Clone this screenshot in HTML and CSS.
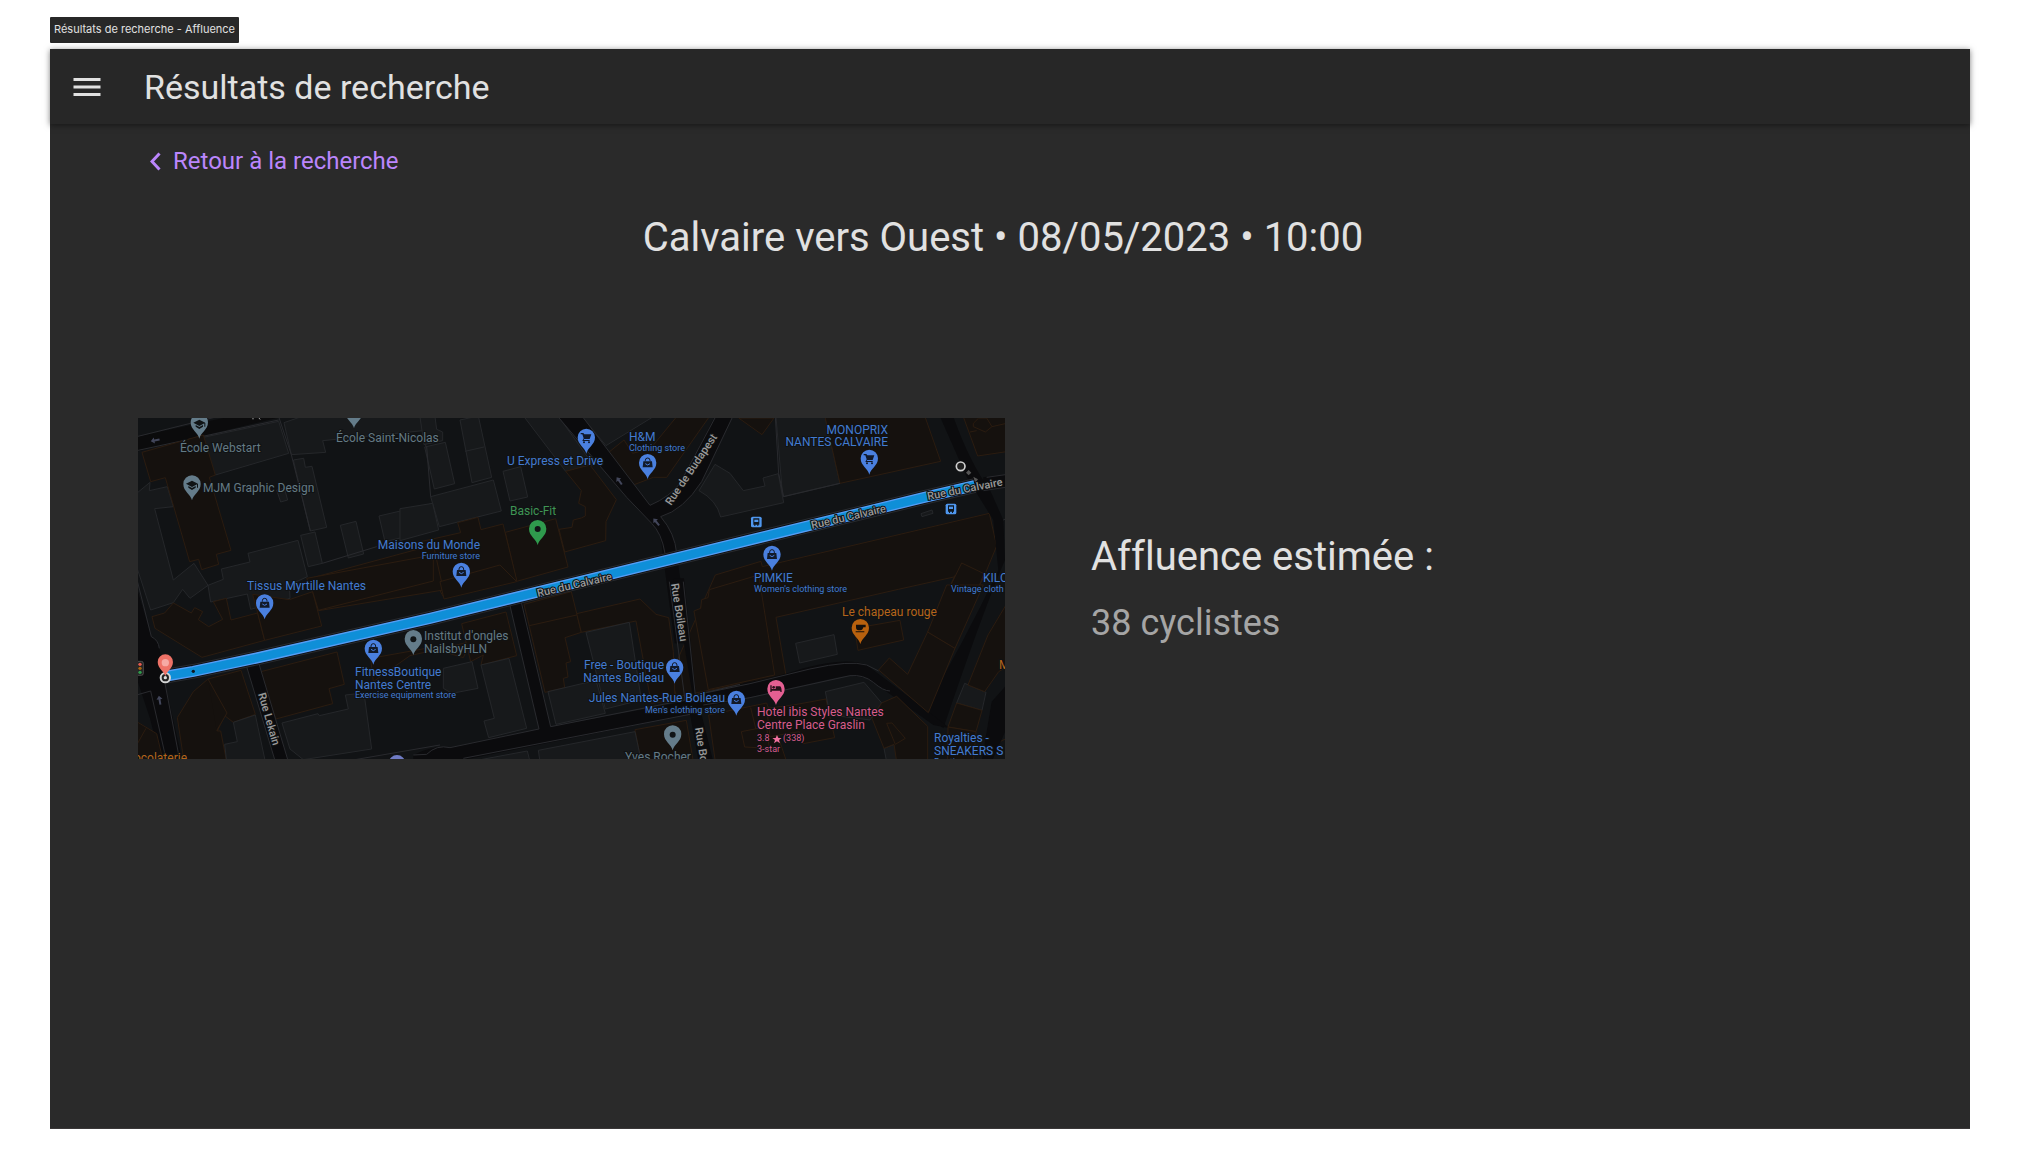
FILE: index.html
```html
<!DOCTYPE html>
<html lang="fr">
<head>
<meta charset="utf-8">
<meta name="viewport" content="width=device-width, initial-scale=1">
<title>Résultats de recherche - Affluence</title>
<link rel="stylesheet" href="styles.css">
</head>
<body>
<p class="frame-label">Résultats de recherche - Affluence</p>
<div class="screen">
  <header class="app-bar">
    <button class="menu-button" type="button" aria-label="Menu">
      <svg width="36" height="36" viewBox="0 0 24 24" aria-hidden="true"><path d="M3 18h18v-2H3v2zm0-5h18v-2H3v2zm0-7v2h18V6H3z" fill="currentColor"/></svg>
    </button>
    <h1 class="app-title">Résultats de recherche</h1>
  </header>
  <main class="content">
    <a class="back-link" href="#recherche">
      <svg width="11" height="19" viewBox="0 0 11 19" aria-hidden="true"><path d="M9.500 1.500L2 9.500l7.500 8" fill="none" stroke="currentColor" stroke-width="3"/></svg>
      Retour à la recherche
    </a>
    <h2 class="query">Calvaire vers Ouest • 08/05/2023 • 10:00</h2>
    <div class="result">
      <svg class="map" viewBox="0 0 867 341" role="img" aria-label="Itinéraire rue du Calvaire, Nantes">
        <defs>
          <path id="pin" d="M0 49C-4 30-26 23-26 0A26 26 0 1 1 26 0C26 23 4 30 0 49Z"/>
          <g id="bag"><path d="M-13-4H13L15 14H-15ZM-6-4V-8A6 6 0 0 1 6-8V-4" fill="#121a29"/><path d="M-7-4V-7A7 7 0 0 1 7-7V-4" fill="#4a80df" stroke="#121a29" stroke-width="3"/><path d="M-7 3Q0 11 7 3" fill="none" stroke="#4a80df" stroke-width="3"/></g>
          <g id="cart" fill="#10182a"><path d="M-17-15H-9L-6-11H15L10 3H-6L-8 6H10V9H-12L-8 1-12-11H-17Z"/><circle cx="-7" cy="13" r="3"/><circle cx="8" cy="13" r="3"/></g>
          <g id="school" fill="#101416"><path d="M-18-3L0-12 18-3 0 7ZM-11 4L0 10 11 4V9L0 16-11 9ZM15-2H18V9H15Z"/></g>
          <g id="bus"><rect x="-16" y="-16" width="32" height="32" rx="5" fill="#4f97ee"/><path d="M-9-11H9V8H6V12H3V8H-3V12H-6V8H-9Z" fill="#101820"/><path d="M-6-7H6V0H-6Z" fill="#4f97ee"/></g>
          <path id="arrow" d="M-14 0L-3-9V-3H13V3H-3V9Z" fill="#42465a"/>
        </defs>
        <rect width="867" height="341" fill="#111315"/>
        <g transform="scale(.33333)">
          <!-- north-west block -->
          <g transform="translate(-24 -24)">
            <g class="lot">
              <path d="M220 82L446 34 476 130 256 195 240 170Z"/>
              <path d="M462 38L520 18H900V60L578 92 587 127 484 134Z"/>
              <path d="M490 150L521 145 526 172 546 169 590 352 541 363Z"/>
              <path d="M440 240L463 234 473 270 452 276Z"/>
              <path d="M631 346L678 334 701 432 655 444Z"/>
              <path d="M512 376L555 366 577 460 535 470Z"/>
              <path d="M747 318L910 280V360L765 395Z"/>
              <path d="M20 250L60 217 58 242 112 230 130 290 74 296 130 510 192 460 234 526 180 565 158 538 130 578 62 600 20 470Z"/>
              <path d="M274 477L360 456 354 430 504 391 532 500 478 525 480 565 362 598 352 552 242 576 234 526 280 508Z"/>
            </g>
            <path d="M20 80L280 24H440L20 125Z" fill="#0b0b0c"/>
            <path class="kerb" d="M20 80L262 20M20 122L446 30M446 20L484 134M484 134L541 363M870 20L900 170M577 460L740 410"/>
            <g class="shop">
              <path d="M36 127L220 75 256 195 238 202 303 421 259 433 266 463 215 479 206 448 179 455 106 203 62 215Z"/>
            </g>
          </g>
          <!-- centre block -->
          <g transform="translate(846 -24)">
            <g class="lot">
              <path d="M0 20H45L50 58 68 66V92L12 104Z"/>
              <path d="M14 111L76 97 104 221 43 237Z"/>
              <path d="M120 30L175 18 215 202 156 218Z"/><path d="M135 124L192 111"/>
              <path d="M32 260L220 210 244 303 58 350Z"/>
              <path d="M-60 296L38 280 56 360-60 392Z"/>
              <path d="M249 184L302 170 323 261 270 273Z"/>
              <path d="M312 20H416L520 165 437 184Z"/>
              <path d="M486 20H700L558 107Z"/>
              <path d="M837 242L885 163 930 190 970 242 1035 228 1029 204 1075 191 1091 278 902 321Q890 270 837 242Z"/>
            </g>
            <g class="shop">
              <path d="M565 128L612 90 638 130 692 115 770 20H868L740 202H700L640 225Z"/>
              <path d="M437 184L510 165 589 269 558 335 557 392 434 426 417 358 456 352 460 330 484 324 496 318V290L476 280 484 242Z"/>
              <path d="M256 367L407 326 444 471 290 514Z"/>
              <path d="M-20 400L122 368 113 338 174 322 183 359 249 342 290 510 70 560Z"/>
              <path d="M-322 503L40 405 70 540-304 602Z"/>
            </g>
            <path d="M412 18L486 18 690 286Q750 260 780 220L885 18H938L845 215Q790 300 722 320 765 370 770 430L808 700H764L728 430Q725 370 695 340Q645 290 620 262Z" fill="#0b0b0d"/>
            <path class="kerb" d="M412 18L620 262 695 340Q725 370 735 430M486 18L690 286Q750 260 780 220L887 20M938 20L845 215Q790 300 722 320 765 370 770 430M20 110L32 260"/>
            <use href="#arrow" transform="translate(598 213) rotate(55)"/>
            <use href="#arrow" transform="translate(709 336) rotate(50)"/>
          </g>
          <!-- north-east block -->
          <g transform="translate(1716 -24)">
            <g class="lot">
              <path d="M198 20H345L390 220 218 260Z"/>
              <path d="M633 311L666 300 669 310 636 320Z"/>
            </g>
            <g class="shop">
              <path d="M345 20H645L692 154 390 220Z"/><path d="M86 24H192L156 74Z"/>
              <path d="M760 20H890V125L803 138Z"/><path d="M780 66L800 62M790 40L806 24H830L846 50 826 66 790 50ZM846 50L890 40"/>
              <path d="M16 495L153 454 157 470 838 310 860 408 822 500 734 672 660 660 736 500 565 538 198 622 228 796-100 860-120 800Z"/>
              <path d="M755 459L822 491 734 716 653 667Z"/><path d="M653 667L736 495"/>
            </g>
            <path d="M690 20L730 20Q780 160 840 240L880 330 885 450Q820 600 700 955L640 905Q760 700 865 480L850 330Q800 250 770 200Z" fill="#0b0b0d"/>
            <path d="M820 202L900 192V230L820 240Z" fill="#0b0b0d"/>
            <path class="kerb" d="M196 20L206 191 221 260M221 260L390 220M830 202L900 192M820 242L900 230M880 330L900 320"/>
          </g>
          <!-- south-west block -->
          <g transform="translate(-24 501)">
            <path d="M15-10L64 155Q85 165 88 190L104 290 160 540H95L60 400 20 280Z" fill="#0b0b0d"/>
            <path class="kerb" d="M20-20L64 155Q85 165 88 190M104 290L150 530M20 330L62 318 110 530"/>
            <g class="shop">
              <path d="M66 95L104 84 130 54 184 84 194 68 218 80 205 104 236 125 278 103 250 50 289 40 303 105 383 84 404 166 216 217 75 130Z"/>
              <path d="M383 84L368 28 478 44 548 20 575 123 404 166Z"/>
              <path d="M548 20L530-20 910-90V-12L565 76Z"/>
              <path d="M385 262L621 201 643 298 597 311 608 356 438 402Z"/>
              <path d="M142 398L190 320 234 282 333 256 376 388 310 412 284 392 262 438 272 438 290 530H162Z"/><path d="M234 282L291 384 260 437"/>
              <path d="M20 410L80 446 100 530H20ZM20 480L48 430"/>
              <path d="M722 220L900 188 1000 218 1022 170 840 212 730 290Z"/>
            </g>
            <g class="lot">
              <path d="M310 412L376 390 406 530H290L284 478 322 470Z"/>
              <path d="M456 414L564 386 568 392 655 372 646 330 702 324 725 492 520 524 480 492Z"/>
            </g>
            <path d="M350 245L388 240 475 530H436Z" fill="#0b0b0d"/>
            <path class="kerb" d="M350 245L436 530M388 240L475 530M640 530L930 480"/>
            <use href="#arrow" transform="translate(89 346) rotate(80)"/>
          </g>
          <!-- south-centre block -->
          <g transform="translate(846 501)">
            <path d="M270 62L308 52 392 425 820 345 760-20 792-20 828 332 980 292Q1080 275 1150 250 1280 215 1340 240L1420 300 1590 430 1540 420 1400 320 1340 280Q1290 265 1240 280L840 370 880 530H836L810 388 130 525-20 530V510Q40 480 90 488L357 432Z" fill="#0b0b0d"/>
            <g class="shop">
              <path d="M312 58L454 20 484 142 435 158 452 230 438 234 444 276 430 280 434 308 375 322 328 124Z"/><path d="M328 122L470 90"/>
              <path d="M470 86L660 42 708 88 746 98 760 200 765 345 694 355 648 108 484 142Z"/>
              <path d="M822 78L842 70 845 44 864 38 868 14 1016-30 1064 270 865 314Z"/>
              <path d="M645 434L799 406 820 530H664Z"/>
              <path d="M866 390L1040 354 1100 530H886Z"/><path d="M992 368L1012 450"/>
              <path d="M125 116L258 81 290 212 183 240 190 210 152 230Z"/><path d="M60-10L240-60 290-10 72 42Z"/>
              <path d="M1120 360L1218 342 1244 458 1150 476 1138 440 1050 455 1040 370Z"/>
            </g>
            <g class="lot">
              <path d="M498 142L628 112 664 345 556 372Z"/><path d="M384 320L528 286 556 385 408 418Z"/>
              <path d="M183 240L267 220 320 430 206 458 192 408 223 400Z"/>
              <path d="M70 250L156 230 174 310 96 325 70 310Z"/>
              <path d="M355 496L645 440 664 530H360Z"/><path d="M160 528L322 498 330 530Z"/>
            </g>
            <path class="kerb" d="M270 62L357 432 90 488Q50 478 20 508L-20 510M304 52L392 425 795 345 748-10M790-10L826 330 960 298M130 520L810 388"/>
          </g>
          <!-- south-east block -->
          <g transform="translate(1716 501)">
            <g class="lot">
              <path d="M257 175L372 149 382 208 269 234Z"/>
              <path d="M346 320L462 292 515 354 480 405 360 390Z"/>
              <path d="M764 295L828 322 816 376 740 354Z"/>
              <path d="M522 490L552 478 570 530H530Z"/>
            </g>
            <g class="shop">
              <path d="M434 130L570 106 581 165 444 196Z"/>
              <path d="M506 255L538 219 593 268 653 141 735 190 655 383Z"/>
              <path d="M486 400L515 354 560 334 653 424V530H560L552 478 522 490Z"/><path d="M530 415L546 414 586 460 556 478Z"/>
              <path d="M710 0H820L735 190 653 141Z"/>
              <path d="M900 40L834 150 774 300 824 320 866 260 900 240Z"/>
              <path d="M740 354L816 376 798 440 714 426Z"/><path d="M714 426L798 440 790 530H712Z"/>
              <path d="M94 440L170 425 178 490 104 486ZM830 490L900 455"/>
            </g>
            <path d="M845 350L890 300V430L845 530H815Z" fill="#0b0b0d"/>
            <path class="kerb" d="M-20 325L120 296 300 252Q420 225 470 240L506 258M-20 360L120 338 420 272Q460 268 490 292 520 318 540 318"/>
          </g>
          <!-- route -->
          <path d="M86 774L166 760 356 720 876 601 1746 388 2356 239 2510 203" fill="none" stroke="#292b2f" stroke-width="44"/>
          <path d="M86 774L166 760 356 720 876 601 1746 388 2356 239 2510 203" fill="none" stroke="#0b0d10" stroke-width="38"/>
          <path d="M86 774L166 760 356 720 876 601 1746 388 2356 239 2510 203" fill="none" stroke="#559df5" stroke-width="33"/>
          <path d="M86 774L166 760 356 720 876 601 1746 388 2356 239 2510 203" fill="none" stroke="#0f8fd8" stroke-width="25"/>
          <circle cx="166" cy="760" r="5" fill="#101820"/>
          <circle cx="2468" cy="145" r="13" fill="#202020" stroke="#d0d0d0" stroke-width="5"/>
          <path d="M2492 156L2500 164 2492 172 2484 164ZM2506 176L2520 184 2512 196Z" fill="#555"/>
          <circle cx="82" cy="779" r="14" fill="#222" stroke="#d6d6d6" stroke-width="6"/><circle cx="82" cy="779" r="5" fill="#ddd"/>
          <g fill="#ee7267"><use href="#pin" transform="translate(82 732) scale(.88)"/></g><circle cx="82" cy="734" r="11" fill="#f6aaa4"/>
          <rect x="-6" y="730" width="22" height="42" rx="6" fill="#222" stroke="#666" stroke-width="2"/><circle cx="6" cy="739" r="5" fill="#e35b50"/><circle cx="6" cy="751" r="5" fill="#a66512"/><circle cx="6" cy="763" r="5" fill="#309b4d"/>
          <use href="#bus" x="1855" y="312"/><use href="#bus" x="2439" y="273"/>
          <use href="#arrow" transform="translate(52 67) rotate(-12)"/>
          <path d="M345 0V4M362 0L367 4" stroke="#aaa" stroke-width="3"/>
          <!-- places -->
          <g fill="#647c8a">
            <use href="#pin" x="184" y="13"/><use href="#pin" x="162" y="198"/><use href="#pin" x="648" y="-18"/><use href="#pin" x="826" y="662"/><use href="#pin" x="1604" y="948"/>
          </g>
          <use href="#school" x="184" y="17"/><use href="#school" x="162" y="200"/>
          <circle cx="826" cy="664" r="9" fill="#101416"/><circle cx="1604" cy="950" r="9" fill="#101416"/>
          <g fill="#4a80df">
            <use href="#pin" x="1345" y="58"/><use href="#pin" x="1529" y="134"/><use href="#pin" x="2194" y="121"/><use href="#pin" x="970" y="460"/><use href="#pin" x="380" y="555"/><use href="#pin" x="1902" y="409"/><use href="#pin" x="706" y="691"/><use href="#pin" x="1610" y="748"/><use href="#pin" x="1795" y="844"/>
          </g>
          <use href="#cart" x="1345" y="60"/><use href="#cart" x="2194" y="123"/>
          <use href="#bag" x="1529" y="134"/><use href="#bag" x="970" y="460"/><use href="#bag" x="380" y="555"/><use href="#bag" x="1902" y="409"/><use href="#bag" x="706" y="691"/><use href="#bag" x="1610" y="748"/><use href="#bag" x="1795" y="844"/>
          <use href="#pin" x="1199" y="332" fill="#2f9a4d"/><circle cx="1199" cy="333" r="9" fill="#101416"/>
          <use href="#pin" x="2167" y="629" fill="#b8610e"/><path d="M2154 620H2183V628H2176Q2174 637 2167 637H2162Q2154 637 2154 627ZM2153 640H2179V643H2153Z" fill="#15100c"/>
          <use href="#pin" x="1914" y="812" fill="#e45f92"/><path d="M1897 802H1901V813H1913V805H1926Q1931 807 1931 822H1927V818H1901V822H1897Z" fill="#241018"/><circle cx="1907" cy="808" r="4" fill="#241018"/>
          <circle cx="777" cy="1036" r="25" fill="#6f7bc4"/>
          <path d="M1917 951l4 9h10l-8 6 3 10-9-6-9 6 3-10-8-6h10z" fill="#f0709f"/>
        </g>
        <g class="road-name">
          <text transform="translate(400 179) rotate(-13)">Rue du Calvaire</text>
          <text transform="translate(674 111) rotate(-13)">Rue du Calvaire</text>
          <text transform="translate(790 82) rotate(-11)">Rue du Calvaire</text>
          <text transform="translate(533 88) rotate(-56)">Rue de Budapest</text>
          <text transform="translate(533 166) rotate(81)">Rue Boileau</text>
          <text transform="translate(557 310) rotate(81)">Rue Boileau</text>
          <text transform="translate(120 276) rotate(74)">Rue Lekain</text>
        </g>
        <g class="place neutral">
          <text x="42" y="34">École Webstart</text><text x="65" y="74">MJM Graphic Design</text><text x="198" y="24">École Saint-Nicolas</text>
          <text x="286" y="222">Institut d'ongles</text><text x="286" y="235">NailsbyHLN</text><text x="487" y="343">Yves Rocher</text>
        </g>
        <g class="place store">
          <text x="369" y="47">U Express et Drive</text><text x="491" y="23">H&amp;M</text><text class="kind" x="491" y="33">Clothing store</text>
          <text class="end" x="750" y="16">MONOPRIX</text><text class="end" x="750" y="28">NANTES CALVAIRE</text>
          <text class="end" x="342" y="131">Maisons du Monde</text><text class="kind end" x="342" y="141">Furniture store</text>
          <text x="109" y="172">Tissus Myrtille Nantes</text>
          <text x="616" y="164">PIMKIE</text><text class="kind" x="616" y="174">Women's clothing store</text>
          <text x="845" y="164">KILO</text><text class="kind" x="813" y="174">Vintage cloth</text>
          <text x="217" y="258">FitnessBoutique</text><text x="217" y="271">Nantes Centre</text><text class="kind" x="217" y="280">Exercise equipment store</text>
          <text class="end" x="526" y="251">Free - Boutique</text><text class="end" x="526" y="264">Nantes Boileau</text>
          <text class="end" x="587" y="284">Jules Nantes-Rue Boileau</text><text class="kind end" x="587" y="295">Men's clothing store</text>
          <text x="796" y="324">Royalties -</text><text x="796" y="337">SNEAKERS S</text><text class="kind" x="796" y="347">Boutique</text>
        </g>
        <g class="place gym"><text x="372" y="97">Basic-Fit</text></g>
        <g class="place food"><text x="704" y="198">Le chapeau rouge</text><text x="861" y="251">M</text><text class="end" x="49" y="344">ocolaterie</text></g>
        <g class="place hotel">
          <text x="619" y="298">Hotel ibis Styles Nantes</text><text x="619" y="311">Centre Place Graslin</text>
          <text class="kind" x="619" y="323">3.8</text><text class="kind" x="645" y="323">(338)</text><text class="kind" x="619" y="334">3-star</text>
        </g>
      </svg>
      <section class="estimate">
        <h3 class="estimate-title">Affluence estimée :</h3>
        <p class="estimate-value">38 cyclistes</p>
      </section>
    </div>
  </main>
</div>
</body>
</html>
```
FILE: styles.css
```css
* {
  box-sizing: border-box;
}

body {
  margin: 0;
  min-height: 100vh;
  padding: 17px 50px 40px;
  display: flex;
  flex-direction: column;
  gap: 6px;
  background: #fff;
  color: #e1e1e1;
  font-family: Roboto, "Liberation Sans", sans-serif;
  font-variant-ligatures: none;
}

h1, h2, h3, p {
  margin: 0;
  font-weight: 400;
}

.frame-label {
  align-self: flex-start;
  padding: 0 4px;
  border-radius: 1px;
  background: #282828;
  color: #e1e1e1;
  font-family: Inter, sans-serif;
  font-size: 11px;
  line-height: 25px;
  padding-bottom: 1px;
}

.screen {
  flex: 1;
  display: flex;
  flex-direction: column;
  background: #2a2a2a;
  border-bottom: 1px solid #3a3738;
}

.app-bar {
  display: flex;
  align-items: center;
  gap: 39px;
  height: 75px;
  padding: 0 19px;
  background: #272727;
  box-shadow: 0 1px 6px rgba(0, 0, 0, 0.5);
}

.menu-button {
  display: flex;
  padding: 0;
  border: 0;
  background: none;
  color: inherit;
  cursor: pointer;
}

.app-title {
  font-size: 34px;
  line-height: 40px;
}

.content {
  padding: 22px 98px 48px 88px;
}

.back-link {
  display: inline-flex;
  align-items: center;
  gap: 12px;
  margin-left: 12px;
  color: #bb86fc;
  font-size: 24px;
  line-height: 30px;
  text-decoration: none;
}

.query {
  margin-top: 38px;
  padding-right: 4px;
  font-size: 40px;
  line-height: 48px;
  text-align: center;
}

.result {
  display: grid;
  grid-template-columns: 1fr 1fr;
  align-items: center;
  margin-top: 156px;
}

.map {
  display: block;
  width: 100%;
}

.estimate {
  padding-left: 86px;
}

.estimate-title {
  font-size: 40px;
  line-height: 68px;
}

.estimate-value {
  color: #a5a5a5;
  font-size: 36px;
  line-height: 64px;
}

.lot {
  fill: #17191b;
  stroke: #25272a;
  stroke-width: 3px;
}

.shop {
  fill: #15110e;
  stroke: #2b1c10;
  stroke-width: 3px;
}

.kerb {
  fill: none;
  stroke: #292a2e;
  stroke-width: 3px;
}

.place,
.road-name {
  font-size: 12px;
  stroke: #101214;
  stroke-width: 2px;
  paint-order: stroke;
}

.place .kind {
  font-size: 9px;
}

.end {
  text-anchor: end;
}

.road-name {
  fill: #9a9a9a;
  font-size: 11px;
  font-weight: 500;
}

.neutral {
  fill: #647a84;
}

.store {
  fill: #437bd0;
}

.gym {
  fill: #3f9554;
}

.food {
  fill: #b5651a;
}

.hotel {
  fill: #d85c8b;
}
```
